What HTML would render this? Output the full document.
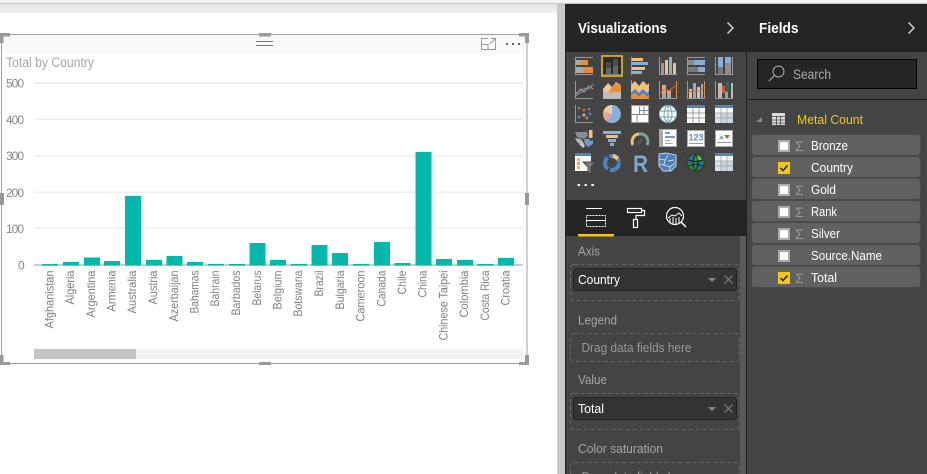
<!DOCTYPE html>
<html><head><meta charset="utf-8"><style>
html,body{margin:0;padding:0;background:#fff;width:927px;height:474px;overflow:hidden}
svg{display:block;font-family:"Liberation Sans",sans-serif}
</style></head><body>
<svg width="927" height="474" viewBox="0 0 927 474" xmlns="http://www.w3.org/2000/svg">
<defs><linearGradient id="t" x1="0" y1="0" x2="0" y2="1"><stop offset="0" stop-color="#e2e2e2"/><stop offset="1" stop-color="#f0f0f0"/></linearGradient></defs>
<rect width="927" height="474" fill="#fff"/>
<rect width="927" height="3" fill="#f1f1f1"/><rect y="3" width="927" height="1" fill="#c8c8c8"/>
<rect y="4" width="557" height="9" fill="url(#t)"/>
<rect x="557" y="4" width="8" height="470" fill="#c8c8c8"/>
<!-- panes -->
<rect x="565" y="4" width="362" height="470" fill="#444"/>
<rect x="565" y="4" width="362" height="48" fill="#252525"/>
<rect x="565" y="4" width="1" height="470" fill="#222"/>
<rect x="746" y="4" width="1" height="470" fill="#222"/>
<!-- visual -->
<rect x="2" y="35" width="525" height="19" fill="#f9f9f9"/>
<g fill="none" stroke="#a0a0a0"><rect x="1.500" y="34.500" width="525.500" height="329"/></g>
<g fill="#999">
<rect x="0" y="33" width="10" height="3.500"/><rect x="0" y="33" width="3.500" height="10"/>
<rect x="519" y="33" width="10" height="3.500"/><rect x="525" y="33" width="4" height="10"/>
<rect x="0" y="362" width="10" height="3"/><rect x="0" y="355" width="3.500" height="10"/>
<rect x="519" y="362" width="10" height="3"/><rect x="525" y="355" width="4" height="10"/>
<rect x="259" y="33" width="12" height="3.500"/><rect x="259" y="362" width="12" height="3"/>
<rect x="0" y="193" width="4" height="12"/><rect x="525" y="193" width="4" height="12"/>
</g>
<rect x="256" y="41" width="17" height="1" fill="#777"/><rect x="256" y="45" width="17" height="1" fill="#777"/>
<path d="M488 38.500H481.500V49.500H495.500V43M481.500 44.500H488V49.500M491 38.500H495.500V42.500M495 39L489.500 44" fill="none" stroke="#999"/>
<g fill="#666"><rect x="506" y="43" width="2" height="2"/><rect x="512" y="43" width="2" height="2"/><rect x="518" y="43" width="2" height="2"/></g>
<text x="6" y="67" font-size="13.500" fill="#a8a4a4" textLength="88" lengthAdjust="spacingAndGlyphs">Total by Country</text>
<!-- grid -->
<g fill="#eee"><rect x="34" y="82" width="489" height="2"/><rect x="34" y="118.500" width="489" height="1.500"/><rect x="34" y="155" width="489" height="1.500"/><rect x="34" y="191.500" width="489" height="1.500"/><rect x="34" y="227.500" width="489" height="1.500"/></g>
<g font-size="12" fill="#888">
<text x="6" y="87.500" textLength="18">500</text><text x="6" y="124" textLength="18">400</text><text x="6" y="160" textLength="18">300</text><text x="6" y="197" textLength="18">200</text><text x="6" y="233" textLength="18">100</text><text x="18" y="269.500">0</text></g>
<rect x="34" y="264" width="489" height="2" fill="#ccc"/>
<!-- bars -->
<g fill="#01b8aa">
<rect x="42" y="264" width="16" height="1.500"/><rect x="63" y="262" width="16" height="3.500"/><rect x="84" y="257.500" width="16" height="8"/><rect x="104" y="261" width="16" height="4.500"/><rect x="125" y="196" width="16" height="69.500"/><rect x="146" y="260" width="16" height="5.500"/><rect x="166.500" y="256" width="16" height="9.500"/><rect x="187" y="262" width="16" height="3.500"/><rect x="208" y="264" width="16" height="1.500"/><rect x="229" y="264" width="16" height="1.500"/><rect x="249.500" y="243" width="16" height="22.500"/><rect x="270" y="260" width="16" height="5.500"/><rect x="291" y="264" width="16" height="1.500"/><rect x="311.500" y="245" width="16" height="20.500"/><rect x="332" y="253" width="16" height="12.500"/><rect x="353" y="264" width="16" height="1.500"/><rect x="374" y="242" width="16" height="23.500"/><rect x="394.500" y="263" width="16" height="2.500"/><rect x="415.500" y="152" width="16" height="113.500"/><rect x="436" y="259" width="16" height="6.500"/><rect x="457" y="260" width="16" height="5.500"/><rect x="477.500" y="264" width="16" height="1.500"/><rect x="498" y="258" width="16" height="7.500"/>
</g>
<!-- x labels -->
<g font-size="12" fill="#808080">
<text transform="translate(53.500,328.500) rotate(-90)" textLength="58" lengthAdjust="spacingAndGlyphs">Afghanistan</text>
<text transform="translate(74,304.500) rotate(-90)" textLength="34" lengthAdjust="spacingAndGlyphs">Algeria</text>
<text transform="translate(95,317.500) rotate(-90)" textLength="47" lengthAdjust="spacingAndGlyphs">Argentina</text>
<text transform="translate(115.500,311.500) rotate(-90)" textLength="41" lengthAdjust="spacingAndGlyphs">Armenia</text>
<text transform="translate(136,313.500) rotate(-90)" textLength="43" lengthAdjust="spacingAndGlyphs">Australia</text>
<text transform="translate(157,304.500) rotate(-90)" textLength="34" lengthAdjust="spacingAndGlyphs">Austria</text>
<text transform="translate(178,321.500) rotate(-90)" textLength="51" lengthAdjust="spacingAndGlyphs">Azerbaijan</text>
<text transform="translate(198.500,313.500) rotate(-90)" textLength="43" lengthAdjust="spacingAndGlyphs">Bahamas</text>
<text transform="translate(219,306.500) rotate(-90)" textLength="36" lengthAdjust="spacingAndGlyphs">Bahrain</text>
<text transform="translate(240,315.500) rotate(-90)" textLength="45" lengthAdjust="spacingAndGlyphs">Barbados</text>
<text transform="translate(261,305.500) rotate(-90)" textLength="35" lengthAdjust="spacingAndGlyphs">Belarus</text>
<text transform="translate(281.500,309.500) rotate(-90)" textLength="39" lengthAdjust="spacingAndGlyphs">Belgium</text>
<text transform="translate(302,316.500) rotate(-90)" textLength="46" lengthAdjust="spacingAndGlyphs">Botswana</text>
<text transform="translate(323,296.500) rotate(-90)" textLength="26" lengthAdjust="spacingAndGlyphs">Brazil</text>
<text transform="translate(344,309.500) rotate(-90)" textLength="39" lengthAdjust="spacingAndGlyphs">Bulgaria</text>
<text transform="translate(364.500,321.500) rotate(-90)" textLength="51" lengthAdjust="spacingAndGlyphs">Cameroon</text>
<text transform="translate(385.500,306.500) rotate(-90)" textLength="36" lengthAdjust="spacingAndGlyphs">Canada</text>
<text transform="translate(406,294.500) rotate(-90)" textLength="24" lengthAdjust="spacingAndGlyphs">Chile</text>
<text transform="translate(426.500,297.500) rotate(-90)" textLength="27" lengthAdjust="spacingAndGlyphs">China</text>
<text transform="translate(447.500,340.500) rotate(-90)" textLength="70" lengthAdjust="spacingAndGlyphs">Chinese Taipei</text>
<text transform="translate(468,317.500) rotate(-90)" textLength="47" lengthAdjust="spacingAndGlyphs">Colombia</text>
<text transform="translate(489,320.500) rotate(-90)" textLength="50" lengthAdjust="spacingAndGlyphs">Costa Rica</text>
<text transform="translate(509.500,305.500) rotate(-90)" textLength="35" lengthAdjust="spacingAndGlyphs">Croatia</text>
</g>
<rect x="34" y="349" width="489" height="10" fill="#f3f3f3"/><rect x="34" y="349" width="102" height="10" fill="#c4c4c4"/>

<!-- headers -->
<text x="578" y="33" font-size="15" font-weight="bold" fill="#fff" textLength="89" lengthAdjust="spacingAndGlyphs">Visualizations</text>
<text x="759" y="33" font-size="15" font-weight="bold" fill="#fff" textLength="39.500" lengthAdjust="spacingAndGlyphs">Fields</text>
<path d="M727.500 22.500L733 28L727.500 33.500M908.500 22.500L914 28L908.500 33.500" fill="none" stroke="#c5d0dc" stroke-width="1.500"/>

<!-- viz gallery -->
<!-- row 1 -->
<g transform="translate(575,57)"><rect width="18" height="1" fill="#999"/><rect y="17" width="18" height="1" fill="#999"/><rect width="1" height="18" fill="#999"/><rect x="1" y="3" width="5" height="5" fill="#aaa"/><rect x="6" y="3" width="7" height="5" fill="#e98d3a"/><rect x="1" y="10" width="7" height="6" fill="#aaa"/><rect x="8" y="10" width="10" height="6" fill="#e98d3a"/></g>
<rect x="602" y="56" width="20" height="20" fill="#2b2b2b" stroke="#f2c811" stroke-width="1.500"/>
<g transform="translate(603,57)"><rect x="3" y="5" width="5" height="6" fill="#4d4d4d"/><rect x="3" y="11" width="5" height="6" fill="#666"/><rect x="10" y="2" width="5" height="7" fill="#4d4d4d"/><rect x="10" y="9" width="5" height="8" fill="#666"/><rect y="17" width="18" height="1" fill="#777"/></g>
<g transform="translate(631,57)"><rect width="1" height="18" fill="#999"/><rect x="1" y="1" width="11" height="3" fill="#eec17f"/><rect x="1" y="5" width="16" height="3" fill="#8aaed6"/><rect x="1" y="10" width="13" height="3" fill="#eec17f"/><rect x="1" y="14" width="10" height="3" fill="#8aaed6"/></g>
<g transform="translate(659,57)"><rect width="1" height="18" fill="#999"/><rect y="17" width="18" height="1" fill="#999"/><rect x="2" y="6" width="3" height="11" fill="#999"/><rect x="6" y="3" width="3" height="14" fill="#eec17f"/><rect x="10" y="0" width="3" height="17" fill="#8aaed6"/><rect x="14" y="6" width="3" height="11" fill="#eec17f"/></g>
<g transform="translate(687,57)"><rect width="18" height="1" fill="#999"/><rect y="17" width="18" height="1" fill="#999"/><rect width="1" height="18" fill="#999"/><rect x="1" y="3" width="6" height="5" fill="#8c8c8c"/><rect x="7" y="3" width="11" height="5" fill="#8aaed6"/><rect x="1" y="10" width="10" height="5" fill="#777"/><rect x="11" y="10" width="7" height="5" fill="#8aaed6"/></g>
<g transform="translate(715,57)"><rect width="1" height="18" fill="#999"/><rect x="17" width="1" height="18" fill="#999"/><rect y="17" width="18" height="1" fill="#999"/><rect x="3" y="0" width="5" height="10" fill="#8aaed6"/><rect x="3" y="10" width="5" height="7" fill="#777"/><rect x="10" y="0" width="6" height="6" fill="#8aaed6"/><rect x="10" y="6" width="6" height="11" fill="#8c8c8c"/></g>
<!-- row 2 -->
<g transform="translate(575,81)"><rect width="1" height="18" fill="#999"/><rect y="17" width="18" height="1" fill="#999"/><path d="M1 13L6 8L9 11L14 5L18 8" fill="none" stroke="#e0a080"/><path d="M1 15L6 11L10 7L14 8L18 3" fill="none" stroke="#6f95c4"/></g>
<g transform="translate(603,81)"><path d="M0 18V8L5 2L9 6L13 1L18 4V18Z" fill="#efc79a"/><path d="M5 12L9 6L13 2L18 4V11L10 12Z" fill="#e98d3a"/><path d="M0 18V10L6 12L12 11L18 12V18Z" fill="#bdbdbd"/></g>
<g transform="translate(631,80)"><rect width="1" height="19" fill="#999"/><path d="M0 19V5L4 1L8 6L12 1L16 5L18 3V19Z" fill="#eec17f"/><path d="M0 13L4 9L8 13L12 9L16 13L18 11V15L16 17L12 13L8 17L4 13L0 17Z" fill="#4f83bd"/><path d="M0 19V15L4 13L8 17L12 13L16 17L18 15V19Z" fill="#e98d3a"/></g>
<g transform="translate(659,81)"><rect width="1" height="18" fill="#999"/><rect x="17" width="1" height="18" fill="#e98d3a"/><rect y="17" width="18" height="1" fill="#999"/><rect x="3" y="4" width="4" height="13" fill="#eda76b"/><rect x="8" y="9" width="4" height="8" fill="#eda76b"/><rect x="3" y="12" width="4" height="5" fill="#aaa"/><rect x="8" y="12" width="4" height="5" fill="#aaa"/><path d="M1 12L6 8L10 10L16 5" fill="none" stroke="#d86a50"/></g>
<g transform="translate(687,81)"><rect width="1" height="18" fill="#999"/><rect x="17" width="1" height="18" fill="#e98d3a"/><rect y="17" width="18" height="1" fill="#999"/><rect x="2" y="8" width="3" height="9" fill="#eec17f"/><rect x="6" y="2" width="3" height="15" fill="#8aaed6"/><rect x="10" y="6" width="3" height="11" fill="#eec17f"/><rect x="14" y="3" width="2" height="14" fill="#8aaed6"/><path d="M1 12L6 9L10 11L16 8" fill="none" stroke="#d86a50"/></g>
<g transform="translate(715,81)"><rect width="1" height="18" fill="#999"/><rect x="16" y="2" width="2" height="16" fill="#bbb"/><rect y="17" width="18" height="1" fill="#999"/><rect x="3" y="2" width="4" height="15" fill="#bbb"/><rect x="7" y="5" width="3" height="7" fill="#d4533c"/><rect x="10" y="10" width="3" height="7" fill="#6fb3a8"/><rect x="11" y="1" width="3" height="10" fill="#2d6b5c"/></g>
<!-- row 3 -->
<g transform="translate(575,105)"><rect width="1" height="18" fill="#999"/><rect y="17" width="18" height="1" fill="#999"/><circle cx="4" cy="3" r="1" fill="#aaa"/><circle cx="9" cy="5" r="1.500" fill="#cc5b45"/><circle cx="14" cy="4" r="1" fill="#aaa"/><circle cx="4" cy="12" r="1.500" fill="#4f83bd"/><circle cx="9" cy="10" r="1.500" fill="#e2b36e"/><circle cx="15" cy="9" r="1.500" fill="#4f83bd"/><circle cx="12" cy="13" r="1.500" fill="#888"/></g>
<g transform="translate(603,105)"><circle cx="9" cy="9" r="9" fill="#8aaed6"/><path d="M9 9V0A9 9 0 0 0 0.500 6Z" fill="#f0cfa0"/><path d="M9 9L0.500 6A9 9 0 0 0 4 16.500Z" fill="#e3a79a"/></g>
<g transform="translate(631,105)"><rect width="18" height="18" fill="#fff"/><path d="M8.500 1.500V9M1 9.500H17M13 1.500V9M8.500 5.500H17M6 10V17" stroke="#888" fill="none"/><rect x="0.500" y="0.500" width="17" height="17" fill="none" stroke="#999"/></g>
<g transform="translate(659,105)"><circle cx="9" cy="9" r="8.500" fill="#fff" stroke="#9cc2e0"/><g fill="none" stroke="#6aa5a0"><ellipse cx="9" cy="9" rx="4" ry="8"/><path d="M9 1V17M1.500 6H16.500M1.500 12H16.500"/></g></g>
<g transform="translate(687,105)"><rect width="18" height="18" fill="#fff"/><rect width="18" height="3" fill="#4f83bd"/><path d="M6 3V18M12 3V18M0 8H18M0 13H18" stroke="#999"/></g>
<g transform="translate(715,105)"><rect width="18" height="18" fill="#fff"/><rect width="18" height="3" fill="#4f83bd"/><rect x="6" y="8" width="12" height="10" fill="#c8d6e6"/><rect x="0" y="8" width="6" height="10" fill="#dce5ef"/><path d="M6 3V18M12 3V18M0 8H18M0 13H18" stroke="#aaa"/></g>
<!-- row 4 -->
<g transform="translate(575,130)"><path d="M0 2H12L13 6L9 9L2 7Z" fill="#8c8c8c"/><path d="M0 8L6 9L8 12L5 14L2 12Z" fill="#b5b5b5"/><path d="M4 14L8 12L10 16L8 18Z" fill="#c4c4c4"/><path d="M9 9H14L16 11L18 10V14L13 17L10 14Z" fill="#6f9bd0"/><rect x="14" y="0" width="3.500" height="8" fill="#eec17f"/></g>
<g transform="translate(603,130)"><rect x="0" y="1" width="18" height="3" fill="#8aaed6"/><rect x="3" y="5" width="12" height="3" fill="#eec17f"/><rect x="5" y="9" width="8" height="3" fill="#8aaed6"/><rect x="7" y="13" width="4" height="3" fill="#8aaed6"/></g>
<g transform="translate(631,130)"><path d="M2 15A7.500 7.500 0 0 1 8 4" fill="none" stroke="#e8c07a" stroke-width="3"/><path d="M8 4A7.500 7.500 0 0 1 16 15" fill="none" stroke="#7aa98f" stroke-width="3"/><path d="M7 14L11 9" stroke="#5a5a5a" stroke-width="2"/></g>
<g transform="translate(659,129)"><rect x="0.500" y="0.500" width="17" height="17" fill="#fff" stroke="#aaa"/><rect x="1" y="1" width="3" height="16" fill="#aaa"/><rect x="6" y="3" width="5" height="2" fill="#6f9bd0"/><rect x="6" y="7" width="10" height="2" fill="#6f9bd0"/><rect x="6" y="11" width="6" height="1" fill="#aaa"/><rect x="6" y="14" width="8" height="1" fill="#aaa"/></g>
<g transform="translate(687,130)"><rect x="0.500" y="0.500" width="17" height="16" fill="#fff" stroke="#aaa"/><text x="1.500" y="10.500" font-size="9" font-weight="bold" fill="#5c8fc6" textLength="15" lengthAdjust="spacingAndGlyphs">123</text><rect x="2" y="13" width="14" height="1" fill="#999"/></g>
<g transform="translate(715,130)"><rect x="0.500" y="0.500" width="17" height="16" fill="#fff" stroke="#aaa"/><path d="M4 9L6.500 5L9 9Z" fill="#6fb3a0"/><path d="M9 5H15L12 9Z" fill="#d4533c"/><rect x="2" y="12" width="14" height="1" fill="#999"/></g>
<!-- row 5 -->
<g transform="translate(575,153)"><rect width="16" height="18" fill="#fff"/><rect width="16" height="3" fill="#4f83bd"/><rect x="2" y="5" width="3" height="3" fill="#e6b470"/><rect x="2" y="9" width="3" height="3" fill="#e6a090"/><rect x="2" y="13" width="3" height="3" fill="#e6b470"/><path d="M8 9H20L16 14V20H13V14Z" fill="#7d7d7d" stroke="#444" stroke-width="1"/></g>
<g transform="translate(603,153)"><circle cx="9" cy="10" r="7" fill="none" stroke="#4f83bd" stroke-width="4" stroke-dasharray="13 2"/><path d="M10 2.500L15 5.500" stroke="#eec17f" stroke-width="4"/></g>
<text x="633" y="172" font-size="24" font-weight="bold" fill="#7fa6cf" textLength="15" lengthAdjust="spacingAndGlyphs">R</text>
<g transform="translate(658,153)"><path d="M1 1L8 0L18 2V13L13 18H5L1 13Z" fill="#4f7fb5" stroke="#c6d6e8"/><path d="M1 6L7 7L10 2M7 7L6 12L1 11M6 12L12 14L17 10M10 8L16 7M12 14V18" fill="none" stroke="#c6d6e8"/></g>
<g transform="translate(686,153)"><circle cx="9.500" cy="9.500" r="9.500" fill="#3a3a3a"/><circle cx="9.500" cy="9.500" r="8" fill="#2b8a3e"/><path d="M3 5L9 3L8 9L3 11ZM11 8L16 9L15 14L10 15Z" fill="#2366b8"/><path d="M10 3L14 4L15 7L11 7Z" fill="#7ec850"/><path d="M2 7C7 9 12 9 17 7M2 13C7 11 12 11 17 13M9.500 1.500C6 6 6 13 9.500 17.500M9.500 1.500C13 6 13 13 9.500 17.500" fill="none" stroke="#111" stroke-width=".8"/></g>
<g transform="translate(715,153)"><rect width="18" height="18" fill="#fff"/><rect width="18" height="3" fill="#4f83bd"/><rect x="6" y="8" width="12" height="10" fill="#c8d6e6"/><rect x="0" y="8" width="6" height="10" fill="#dce5ef"/><path d="M6 3V18M12 3V18M0 8H18M0 13H18" stroke="#aaa"/></g>
<g><rect x="577" y="184" width="1" height="2" fill="#7fa6d8"/><rect x="578" y="184" width="2" height="2" fill="#fff"/><rect x="584" y="184" width="1" height="2" fill="#7fa6d8"/><rect x="585" y="184" width="2" height="2" fill="#fff"/><rect x="591" y="184" width="1" height="2" fill="#e8b090"/><rect x="592" y="184" width="2" height="2" fill="#fff"/></g>
<!-- tab bar -->
<rect x="566" y="200" width="180" height="36" fill="#252525"/>
<rect x="578" y="234" width="36" height="2.500" fill="#f2c811"/>
<g transform="translate(570,195)" fill="none" stroke="#fff">
<path d="M16 13.500H32"/>
<rect x="16.500" y="20.500" width="19" height="5" stroke-dasharray="2 1"/><rect x="16.500" y="25.500" width="19" height="6" stroke-dasharray="2 1"/>
<rect x="57.500" y="13.500" width="14" height="4" stroke-width="1.200"/><path d="M71.500 15.500H74.500V20.500H66V24" stroke-width="1.200"/><rect x="63.500" y="24.500" width="4" height="8" stroke-width="1.200"/>
<circle cx="105" cy="21" r="8.500" stroke-width="1.200"/><path d="M98 23L102 20L105 21L109 18L112 21M100 23V28M103 22V29M106 23V29M109 22V28" stroke-width="1"/><path d="M111 27L116 32" stroke-width="1.500"/>
</g>
<!-- scrollbar -->
<rect x="740" y="236" width="6" height="238" fill="#5a5a5a"/>
<!-- wells -->
<g font-size="13" fill="#a6a6a6">
<text x="578" y="255.500" textLength="22" lengthAdjust="spacingAndGlyphs">Axis</text>
<text x="578" y="324.500" textLength="39" lengthAdjust="spacingAndGlyphs">Legend</text>
<text x="578" y="384" textLength="29" lengthAdjust="spacingAndGlyphs">Value</text>
<text x="578" y="453" textLength="85" lengthAdjust="spacingAndGlyphs">Color saturation</text>
</g>
<g fill="none" stroke="#666" stroke-dasharray="4 3">
<rect x="570.500" y="264.500" width="168.500" height="36" rx="3"/>
<rect x="570.500" y="333.500" width="168.500" height="28" rx="3"/>
<rect x="570.500" y="393.500" width="168.500" height="36" rx="3"/>
<rect x="570.500" y="462.500" width="168.500" height="30" rx="3"/>
</g>
<rect x="573.500" y="268.500" width="163" height="22" rx="3" fill="#333" stroke="#222"/>
<rect x="573.500" y="397.500" width="163" height="22" rx="3" fill="#333" stroke="#222"/>
<g font-size="13" fill="#fff">
<text x="578" y="284" textLength="42" lengthAdjust="spacingAndGlyphs">Country</text>
<text x="578" y="413" textLength="26" lengthAdjust="spacingAndGlyphs">Total</text>
</g>
<g font-size="13" fill="#999">
<text x="581.500" y="352" textLength="110" lengthAdjust="spacingAndGlyphs">Drag data fields here</text>
<text x="581.500" y="481" textLength="110" lengthAdjust="spacingAndGlyphs">Drag data fields here</text>
</g>
<path d="M708 278H716L712 282ZM708 407H716L712 411Z" fill="#888"/>
<path d="M724.500 275.500L732.500 283.500M732.500 275.500L724.500 283.500M724.500 404.500L732.500 412.500M732.500 404.500L724.500 412.500" stroke="#888" fill="none"/>
<!-- fields -->
<rect x="757.500" y="59.500" width="159" height="29" fill="#252525" stroke="#000"/>
<circle cx="778.500" cy="71.500" r="5.500" fill="none" stroke="#aaa"/><path d="M774.500 75.500L769 81" stroke="#aaa" stroke-width="1.200"/>
<text x="793" y="79" font-size="13.500" fill="#aaa" textLength="38" lengthAdjust="spacingAndGlyphs">Search</text>
<rect x="747" y="99" width="180" height="1" fill="#1a1a1a"/>
<path d="M756 122L762 117V122Z" fill="#888"/>
<g transform="translate(772,113)"><rect width="13" height="12" fill="#ddd"/><path d="M0 3.500H13M0 7H13M0 10H13M4.500 3V12M8.500 3V12" stroke="#444" stroke-width=".8"/></g>
<text x="797" y="124" font-size="13" fill="#f2c811" textLength="66" lengthAdjust="spacingAndGlyphs">Metal Count</text>
<g fill="#616161" stroke="#4a4a4a">
<rect x="751.500" y="134.500" width="169" height="21" rx="3"/><rect x="751.500" y="156.500" width="169" height="21" rx="3"/><rect x="751.500" y="178.500" width="169" height="21" rx="3"/><rect x="751.500" y="200.500" width="169" height="21" rx="3"/><rect x="751.500" y="222.500" width="169" height="21" rx="3"/><rect x="751.500" y="244.500" width="169" height="21" rx="3"/><rect x="751.500" y="266.500" width="169" height="21" rx="3"/>
</g>
<g fill="#fff" stroke="#aaa" stroke-width="2">
<rect x="779" y="141" width="10" height="10"/><rect x="779" y="185" width="10" height="10"/><rect x="779" y="207" width="10" height="10"/><rect x="779" y="229" width="10" height="10"/><rect x="779" y="251" width="10" height="10"/>
</g>
<g fill="#f2c811"><rect x="778" y="162" width="12" height="12"/><rect x="778" y="272" width="12" height="12"/></g>
<path d="M780.500 168L783 170.500L787.500 165.500M780.500 278L783 280.500L787.500 275.500" fill="none" stroke="#222" stroke-width="1.500"/>
<g font-size="14" fill="#999">
<text x="795" y="151">Σ</text><text x="795" y="195">Σ</text><text x="795" y="217">Σ</text><text x="795" y="239">Σ</text><text x="795" y="283">Σ</text>
</g>
<g font-size="13" fill="#fff">
<text x="811" y="150" textLength="37" lengthAdjust="spacingAndGlyphs">Bronze</text>
<text x="811" y="172" textLength="42" lengthAdjust="spacingAndGlyphs">Country</text>
<text x="811" y="194" textLength="25" lengthAdjust="spacingAndGlyphs">Gold</text>
<text x="811" y="216" textLength="26" lengthAdjust="spacingAndGlyphs">Rank</text>
<text x="811" y="238" textLength="29" lengthAdjust="spacingAndGlyphs">Silver</text>
<text x="811" y="260" textLength="71" lengthAdjust="spacingAndGlyphs">Source.Name</text>
<text x="811" y="282" textLength="26" lengthAdjust="spacingAndGlyphs">Total</text>
</g>
</svg>
</body></html>
